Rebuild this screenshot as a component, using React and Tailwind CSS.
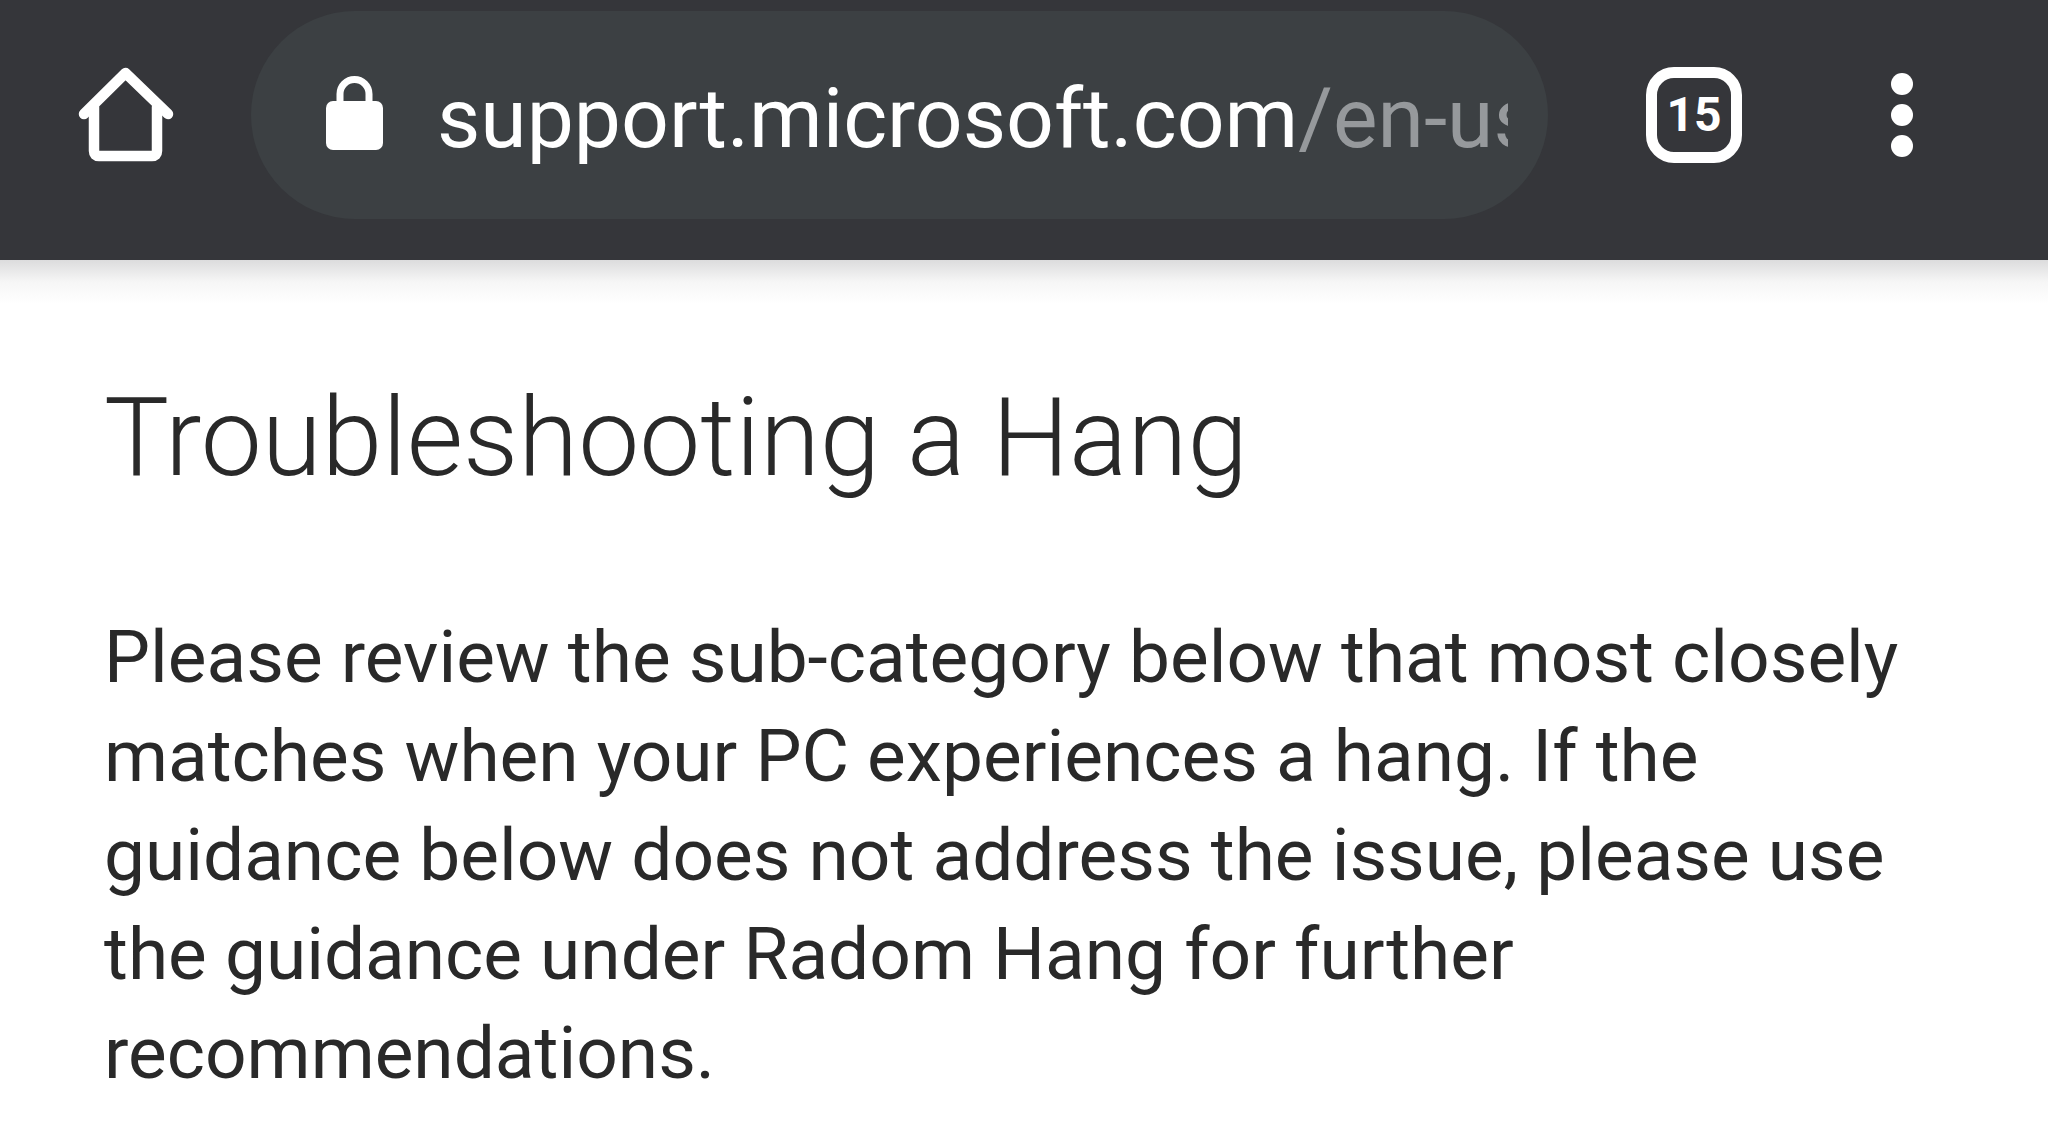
function HomeIcon() {
  return (
    <svg className="h-24 w-24" viewBox="0 0 96 96" fill="none" stroke="#fff" strokeWidth="10.5" strokeLinejoin="round" strokeLinecap="round" aria-hidden="true">
      <path d="M6 47 L47.5 6 L90 47" />
      <path d="M16 40 V84 Q16 89 21 89 H74 Q79 89 79 84 V40" />
    </svg>
  );
}

function LockIcon() {
  return (
    <svg className="h-[76px] w-[60px] shrink-0" viewBox="0 0 60 76" aria-hidden="true">
      <path d="M15 32 V19 a14.5 14.5 0 0 1 29 0 V32" fill="none" stroke="#fff" strokeWidth="7" />
      <rect x="1" y="26" width="57" height="49" rx="7" fill="#fff" />
    </svg>
  );
}

export default function App() {
  return (
    <div className="min-h-screen bg-white font-['Roboto',sans-serif] text-[#292929]">
      <header className="flex h-[260px] items-start bg-[#35363a] pt-[11px]">
        <button type="button" aria-label="Home" className="ml-[78px] mt-14 shrink-0">
          <HomeIcon />
        </button>
        <div className="ml-[77px] flex h-[208px] min-w-0 flex-1 items-center rounded-full bg-[#3c4043] pb-1 pl-[74px] pr-10">
          <LockIcon />
          <a href="https://support.microsoft.com/en-us" className="ml-[52px] min-w-0 flex-1 overflow-hidden whitespace-nowrap pt-3 text-[84px] leading-[96px] text-white">
            support.microsoft.com<span className="text-[#96999c]">/en-us</span>
          </a>
        </div>
        <button type="button" aria-label="15 open tabs" className="ml-[98px] mt-14 flex h-24 w-24 shrink-0 items-center justify-center rounded-[28px] border-[11px] border-white text-5xl font-bold text-white">
          15
        </button>
        <button type="button" aria-label="Menu" className="ml-[149px] mr-[135px] mt-[62px] flex shrink-0 flex-col gap-[9px]">
          <span className="size-[22px] rounded-full bg-white" />
          <span className="size-[22px] rounded-full bg-white" />
          <span className="size-[22px] rounded-full bg-white" />
        </button>
      </header>
      <div className="h-11 bg-linear-to-b from-[#dcdcdd] via-[#f6f6f6] to-white" />
      <main className="px-[104px] pt-[68px]">
        <h1 className="text-[109px] font-light leading-[132px]">Troubleshooting a Hang</h1>
        <p className="mt-[104px] text-[73px] leading-[99px]">
          Please review the sub-category below that most closely matches when your PC experiences a hang. If the guidance below does not address the issue, please use the guidance under Radom Hang for further recommendations.
        </p>
      </main>
    </div>
  );
}
